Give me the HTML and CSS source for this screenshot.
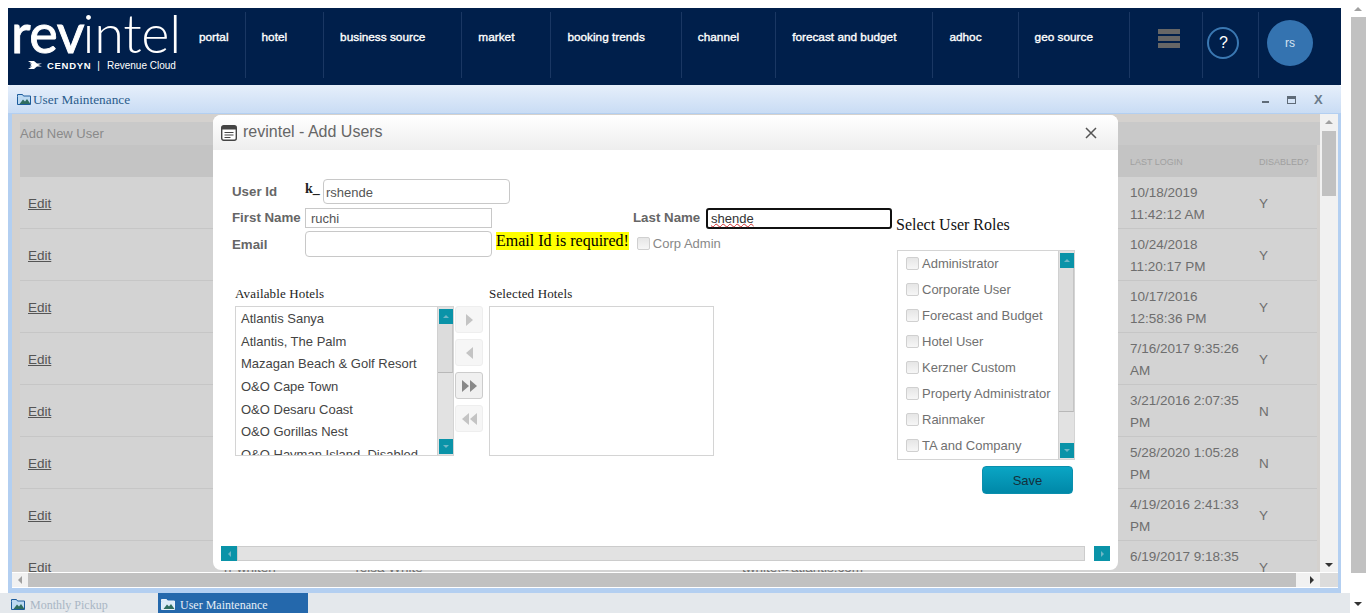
FILE: index.html
```html
<!DOCTYPE html>
<html lang="en">

<head>
    <meta charset="UTF-8">
    <meta name="viewport" content="width=device-width, initial-scale=1.0">
    <title>User Maintenance</title>
    <link rel="stylesheet" href="styles.css">
</head>

<body>
    <div class="shell">
        <header class="topnav">
            <div class="logo">
                <div class="logoWord"><b>rev</b>intel</div>
                <div class="logoSub">
                    <svg class="logoArrow" viewBox="0 0 14 8" width="14" height="8">
                        <path d="M0 0h6l3 2.500h5L10 4l4 1.500H9L6 8H0l4-2.500H1.500L3.500 4 1.500 2.500H4z" fill="#fff" />
                    </svg>
                    <span class="cendyn">CENDYN</span>
                    <span class="pipe">|</span>
                    <span class="cloud">Revenue Cloud</span>
                </div>
            </div>
            <a class="navItem navFirst">portal</a>
            <a class="navItem">hotel</a>
            <a class="navItem">business source</a>
            <a class="navItem">market</a>
            <a class="navItem">booking trends</a>
            <a class="navItem">channel</a>
            <a class="navItem">forecast and budget</a>
            <a class="navItem">adhoc</a>
            <a class="navItem">geo source</a>
            <div class="navTool menuTool">
                <span class="bar"></span><span class="bar"></span><span class="bar"></span>
            </div>
            <div class="navTool helpTool"><span class="helpRing">?</span></div>
            <div class="avatarTool"><span class="avatar">rs</span></div>
        </header>

        <section class="win">
            <div class="winTitle">
                <svg class="winIcon" viewBox="0 0 15 13" width="15" height="13">
                    <path d="M0.500 3.500V1.500h5l1 1.500h7v8.500h-13z" fill="#bcd9f2" stroke="#1d5c9c" />
                    <path d="M2.500 11l3.500-4.500 2 2 2-2.500 3.500 5z" fill="#2f6d5f" />
                </svg>
                <span class="winName">User Maintenance</span>
                <div class="winBtns">
                    <span class="winMin"></span>
                    <span class="winMax"></span>
                    <span class="winClose">X</span>
                </div>
            </div>

            <div class="winBody">
                <div class="viewRow">
                    <div class="view">
                        <div class="addRow">Add New User</div>
                        <table class="users">
                            <colgroup>
                                <col class="colEdit">
                                <col class="colUser">
                                <col class="colName">
                                <col class="colMail">
                                <col class="colLogin">
                                <col class="colOff">
                            </colgroup>
                            <thead>
                                <tr>
                                    <th></th>
                                    <th></th>
                                    <th></th>
                                    <th></th>
                                    <th>LAST LOGIN</th>
                                    <th>DISABLED?</th>
                                </tr>
                            </thead>
                            <tbody>
                                <tr><td><a>Edit</a></td><td></td><td></td><td></td><td>10/18/2019 11:42:12 AM</td><td>Y</td></tr>
                                <tr><td><a>Edit</a></td><td></td><td></td><td></td><td>10/24/2018 11:20:17 PM</td><td>Y</td></tr>
                                <tr><td><a>Edit</a></td><td></td><td></td><td></td><td>10/17/2016 12:58:36 PM</td><td>Y</td></tr>
                                <tr><td><a>Edit</a></td><td></td><td></td><td></td><td>7/16/2017 9:35:26 AM</td><td>Y</td></tr>
                                <tr><td><a>Edit</a></td><td></td><td></td><td></td><td>3/21/2016 2:07:35 PM</td><td>N</td></tr>
                                <tr><td><a>Edit</a></td><td></td><td></td><td></td><td>5/28/2020 1:05:28 PM</td><td>N</td></tr>
                                <tr><td><a>Edit</a></td><td></td><td></td><td></td><td>4/19/2016 2:41:33 PM</td><td>Y</td></tr>
                                <tr><td><a>Edit</a></td><td>rr whiten</td><td>Teisa White</td><td>twhite@atlantis.com</td><td>6/19/2017 9:18:35 PM</td><td>Y</td></tr>
                            </tbody>
                        </table>
                    </div>
                    <div class="vScroll">
                        <span class="tri triUp dim"></span>
                        <div class="vTrack"><div class="vThumb"></div></div>
                        <span class="tri triDown"></span>
                    </div>
                </div>
                <div class="hScroll">
                    <div class="hEnd"><span class="tri triLeft dim"></span></div>
                    <div class="hThumb"></div>
                    <div class="hEnd hEndRight"><span class="tri triRight"></span></div>
                    <div class="hCorner"></div>
                </div>

                <div class="modal">
                    <div class="modalHead">
                        <svg class="modalIcon" viewBox="0 0 16 16" width="16" height="16">
                            <rect x="0.700" y="0.700" width="14.600" height="14.600" rx="2" fill="#fff" stroke="#444" stroke-width="1.400" />
                            <rect x="1" y="1" width="14" height="3.500" fill="#444" />
                            <path d="M3.500 7.500h9M3.500 10h9M3.500 12.500h6" stroke="#444" stroke-width="1.200" />
                        </svg>
                        <span class="modalTitle">revintel - Add Users</span>
                        <svg class="modalClose" viewBox="0 0 12 12" width="12" height="12">
                            <path d="M1 1l10 10M11 1L1 11" stroke="#555" stroke-width="1.500" />
                        </svg>
                    </div>

                    <div class="modalBody">
                        <div class="leftCol">
                            <div class="formRow rowUser">
                                <label class="fieldLabel">User Id</label>
                                <span class="prefix">k_</span>
                                <input class="field fieldUser" type="text" value="rshende">
                            </div>
                            <div class="formRow rowName">
                                <label class="fieldLabel">First Name</label>
                                <input class="field fieldFirst" type="text" value="ruchi">
                                <label class="fieldLabel lastLabel">Last Name</label>
                                <div class="field fieldLast" contenteditable="true" spellcheck="false"><span class="misspelt">shende</span></div>
                            </div>
                            <div class="formRow rowMail">
                                <label class="fieldLabel">Email</label>
                                <input class="field fieldMail" type="text">
                                <span class="emailError">Email Id is required!</span>
                                <span class="check corpCheck"></span>
                                <span class="corpText">Corp Admin</span>
                            </div>

                            <div class="hotels">
                                <div class="hotelCol">
                                    <div class="hotelTitle">Available Hotels</div>
                                    <div class="listBox available">
                                        <ul class="hotelList">
                                            <li>Atlantis Sanya</li>
                                            <li>Atlantis, The Palm</li>
                                            <li>Mazagan Beach &amp; Golf Resort</li>
                                            <li>O&amp;O Cape Town</li>
                                            <li>O&amp;O Desaru Coast</li>
                                            <li>O&amp;O Gorillas Nest</li>
                                            <li>O&amp;O Hayman Island, Disabled</li>
                                        </ul>
                                        <div class="miniScroll hotelScroll">
                                            <span class="tealBtn"><span class="tri triUp"></span></span>
                                            <div class="miniTrack"><div class="miniThumb hotelThumb"></div></div>
                                            <span class="tealBtn"><span class="tri triDown"></span></span>
                                        </div>
                                    </div>
                                </div>
                                <div class="moveBtns">
                                    <button class="moveBtn off" type="button"><span class="tri triRight"></span></button>
                                    <button class="moveBtn off" type="button"><span class="tri triLeft"></span></button>
                                    <button class="moveBtn on" type="button"><span class="tri triRight"></span><span class="tri triRight"></span></button>
                                    <button class="moveBtn off" type="button"><span class="tri triLeft"></span><span class="tri triLeft"></span></button>
                                </div>
                                <div class="hotelCol">
                                    <div class="hotelTitle">Selected Hotels</div>
                                    <div class="listBox selected"></div>
                                </div>
                            </div>
                        </div>

                        <div class="rightCol">
                            <div class="rolesTitle">Select User Roles</div>
                            <div class="listBox roles">
                                <ul class="roleList">
                                    <li><span class="check"></span>Administrator</li>
                                    <li><span class="check"></span>Corporate User</li>
                                    <li><span class="check"></span>Forecast and Budget</li>
                                    <li><span class="check"></span>Hotel User</li>
                                    <li><span class="check"></span>Kerzner Custom</li>
                                    <li><span class="check"></span>Property Administrator</li>
                                    <li><span class="check"></span>Rainmaker</li>
                                    <li><span class="check"></span>TA and Company</li>
                                </ul>
                                <div class="miniScroll roleScroll">
                                    <span class="tealBtn"><span class="tri triUp"></span></span>
                                    <div class="miniTrack"><div class="miniThumb roleThumb"></div></div>
                                    <span class="tealBtn"><span class="tri triDown"></span></span>
                                </div>
                            </div>
                            <button class="saveBtn" type="button">Save</button>
                        </div>
                    </div>

                    <div class="modalScroll">
                        <span class="tealBtn wide"><span class="tri triLeft"></span></span>
                        <div class="modalTrack"></div>
                        <span class="tealBtn wide"><span class="tri triRight"></span></span>
                    </div>
                </div>
            </div>
        </section>

        <footer class="taskbar">
            <div class="task">
                <svg class="winIcon" viewBox="0 0 15 13" width="15" height="13">
                    <path d="M0.500 3.500V1.500h5l1 1.500h7v8.500h-13z" fill="#bcd9f2" stroke="#1d5c9c" />
                    <path d="M2.500 11l3.500-4.500 2 2 2-2.500 3.500 5z" fill="#2f6d5f" />
                </svg>
                <span>Monthly Pickup</span>
            </div>
            <div class="task active">
                <svg class="winIcon" viewBox="0 0 15 13" width="15" height="13">
                    <path d="M0.500 3.500V1.500h5l1 1.500h7v8.500h-13z" fill="#dcebf8" stroke="#e8f0f8" />
                    <path d="M2.500 11l3.500-4.500 2 2 2-2.500 3.500 5z" fill="#2f6d5f" />
                </svg>
                <span>User Maintenance</span>
            </div>
        </footer>
    </div>

    <div class="pageScroll">
        <span class="tri triUp dim"></span>
        <div class="pageTrack"><div class="pageThumb"></div></div>
        <span class="tri triDown"></span>
    </div>
</body>

</html>
```
FILE: styles.css
```css
* {
    box-sizing: border-box;
}

html,
body {
    height: 100%;
}

body {
    margin: 0;
    display: flex;
    overflow: hidden;
    background: #ffffff;
    font-family: "Liberation Sans", Arial, sans-serif;
}

ul {
    margin: 0;
    padding: 0;
    list-style: none;
}

.shell {
    width: 1350px;
    height: 613px;
    padding-top: 8px;
    display: flex;
    flex-direction: column;
}

/* top navigation */
.topnav {
    margin: 0 9px 0 8px;
    height: 77px;
    flex: none;
    display: flex;
    background: #001f4b;
    color: #ffffff;
}

.logo {
    width: 175px;
    padding: 0 0 0 3px;
    flex: none;
}

.logoWord {
    height: 51px;
    font-family: "Lato", sans-serif;
    font-weight: 300;
    font-size: 54px;
    line-height: 50px;
    letter-spacing: -0.300px;
    white-space: nowrap;
}

.logoWord b {
    font-weight: 400;
    -webkit-text-stroke: 0.900px #ffffff;
    margin-right: -2px;
}

.logoSub {
    display: flex;
    align-items: center;
    height: 12px;
    font-size: 9.500px;
    padding-left: 17px;
    white-space: nowrap;
}

.logoArrow {
    margin-right: 5px;
}

.cendyn {
    font-weight: 700;
    letter-spacing: 0.700px;
}

.pipe {
    margin: 0 7px 0 6px;
    font-size: 10px;
}

.cloud {
    font-size: 10px;
}

.navItem {
    padding: 18px 36px 0 16px;
    margin: 4px 0 7px;
    border-right: 1px solid #1a3763;
    font-size: 11.800px;
    -webkit-text-stroke: 0.350px #ffffff;
    white-space: nowrap;
}

.navFirst {
    padding-right: 16px;
}

.navTool {
    margin: 4px 0 7px;
    border-right: 1px solid #1a3763;
    flex: none;
}

.menuTool {
    width: 73px;
    display: flex;
    flex-direction: column;
    align-items: center;
    gap: 2px;
    padding: 17px 0 0 6px;
}

.bar {
    width: 22px;
    height: 5px;
    background: #666666;
}

.helpTool {
    width: 56px;
    display: flex;
    justify-content: center;
    padding: 15px 14px 0 0;
}

.helpRing {
    width: 32px;
    height: 32px;
    flex: none;
    border: 2px solid #3a78b2;
    border-radius: 50%;
    text-align: center;
    font-size: 16px;
    line-height: 28px;
}

.avatarTool {
    flex: 1;
    padding: 12px 0 0 8px;
}

.avatar {
    display: block;
    width: 46px;
    height: 46px;
    border-radius: 50%;
    background: #3473b0;
    color: #d5e3f1;
    font-size: 12px;
    line-height: 46px;
    text-align: center;
}

/* window */
.win {
    margin: 0 9px 0 8px;
    height: 508px;
    flex: none;
    display: flex;
    flex-direction: column;
    background: #b3cff1;
    border-radius: 4px 4px 0 0;
}

.winTitle {
    height: 29px;
    flex: none;
    display: flex;
    align-items: center;
    gap: 1px;
    padding: 1px 17px 0 9px;
    background: linear-gradient(#e6effb, #c9dcf4);
    border-bottom: 1px solid #b3cff1;
    border-radius: 4px 4px 0 0;
}

.winName {
    font-family: "Liberation Serif", serif;
    font-size: 13.300px;
    color: #2b5c8c;
}

.winBtns {
    margin-left: auto;
    display: flex;
    align-items: center;
    gap: 18px;
}

.winMin {
    width: 7px;
    height: 2px;
    margin-top: 5px;
    background: #5f6b78;
}

.winMax {
    width: 9px;
    height: 8px;
    border: 1px solid #5f6b78;
    border-top-width: 3px;
}

.winClose {
    font-size: 13px;
    font-weight: 700;
    color: #6a7a8a;
    width: 10px;
}

.winBody {
    position: relative;
    flex: 1;
    min-height: 0;
    margin: 0 3px 5px 4px;
    display: flex;
    flex-direction: column;
    background: #ffffff;
}

.viewRow {
    height: 458px;
    flex: none;
    display: flex;
}

.view {
    width: 1308px;
    flex: none;
    padding: 8px 0 0 8px;
    background: #d4d1ce;
    overflow: hidden;
}

.addRow {
    height: 23px;
    width: 1300px;
    background: #c9c9c9;
    color: #8a8a8a;
    font-size: 13px;
    line-height: 24px;
}

.users {
    width: 1297px;
    table-layout: fixed;
    border-collapse: separate;
    border-spacing: 0;
    font-size: 13.500px;
    color: #6e6e6e;
}

.colEdit {
    width: 196px;
}

.colUser {
    width: 129px;
}

.colName {
    width: 389px;
}

.colMail {
    width: 388px;
}

.colLogin {
    width: 129px;
}

.users th {
    height: 32px;
    padding: 1px 0 0 8px;
    background: #c4c4c4;
    color: #a0a0a0;
    font-size: 9px;
    font-weight: 400;
    text-align: left;
    white-space: nowrap;
}

.users td {
    height: 52px;
    padding: 5px 8px 2px;
    background: #d3d3d3;
    border-bottom: 1px solid #c6c6c6;
    line-height: 22px;
}

.users a {
    color: #555555;
    text-decoration: underline;
}

.vScroll {
    width: 18px;
    flex: none;
    display: flex;
    flex-direction: column;
    align-items: center;
    background: #f1f1f1;
    padding: 6px 0 5px;
}

.vTrack {
    flex: 1;
    width: 100%;
    padding: 7px 2px 0;
}

.vThumb {
    height: 65px;
    background: #c1c1c1;
}

.hScroll {
    height: 15px;
    flex: none;
    display: flex;
    border-top: 1px solid #ffffff;
    background: #f1f1f1;
}

.hEnd {
    width: 16px;
    flex: none;
    display: flex;
    align-items: center;
    justify-content: center;
}

.hEndRight {
    width: 24px;
    justify-content: flex-end;
    padding-right: 6px;
}

.hThumb {
    width: 1268px;
    background: #c1c1c1;
}

.hCorner {
    flex: 1;
    background: #dcdcdc;
}

/* triangles for scrollbars and move buttons */
.tri {
    display: inline-block;
    width: 0;
    height: 0;
    flex: none;
    border-style: solid;
    border-color: transparent;
}

.triUp {
    border-width: 0 4px 4px;
    border-bottom-color: #333333;
}

.triDown {
    border-width: 4px 4px 0;
    border-top-color: #333333;
}

.triLeft {
    border-width: 4px 4px 4px 0;
    border-right-color: #333333;
}

.triRight {
    border-width: 4px 0 4px 4px;
    border-left-color: #333333;
}

.triUp.dim {
    border-bottom-color: #a0a0a0;
}

.triLeft.dim {
    border-right-color: #a0a0a0;
}

/* modal */
.modal {
    position: absolute;
    left: 201px;
    top: 1px;
    width: 905px;
    height: 455px;
    display: flex;
    flex-direction: column;
    background: #ffffff;
    border-radius: 8px;
}

.modalHead {
    height: 35px;
    flex: none;
    display: flex;
    align-items: center;
    padding: 0 21px 0 8px;
    background: linear-gradient(#ffffff, #eeeeee);
    border-radius: 8px 8px 0 0;
}

.modalIcon {
    margin-top: 1px;
}

.modalTitle {
    margin: -2px 0 0 6px;
    font-size: 16px;
    color: #666666;
}

.modalClose {
    margin-left: auto;
}

.modalBody {
    flex: 1;
    min-height: 0;
    display: flex;
    padding: 29px 0 0 19px;
}

.leftCol {
    width: 664px;
    flex: none;
}

.formRow {
    display: flex;
}

.fieldLabel {
    width: 73px;
    flex: none;
    font-size: 13.300px;
    font-weight: 700;
    color: #666666;
    white-space: nowrap;
}

.prefix {
    width: 18px;
    flex: none;
    font-family: "Liberation Serif", serif;
    font-size: 14px;
    font-weight: 700;
    color: #222222;
    line-height: 20px;
}

.field {
    padding: 0 5px;
    border: 1px solid #c8c8c8;
    font-family: inherit;
    font-size: 13px;
    color: #555555;
    background: #ffffff;
}

.rowUser {
    height: 25px;
}

.rowUser .fieldLabel {
    padding-top: 5px;
}

.fieldUser {
    width: 187px;
    height: 25px;
    padding: 2px 0 0 2px;
    border-radius: 4px;
}

.rowName {
    height: 21px;
    margin-top: 4px;
}

.rowName .fieldLabel {
    line-height: 20px;
}

.fieldFirst {
    width: 187px;
    height: 20px;
}

.lastLabel {
    margin-left: 141px;
}

.fieldLast {
    width: 186px;
    height: 21px;
    padding-left: 3px;
    border: 2px solid #111111;
    border-radius: 3px;
    color: #333333;
    line-height: 17px;
    outline: none;
}

.misspelt {
    text-decoration: underline wavy #d03030 1px;
    text-underline-offset: 0;
}

.rowMail {
    height: 26px;
    margin-top: 2px;
}

.rowMail .fieldLabel {
    padding-top: 6px;
}

.fieldMail {
    width: 187px;
    height: 26px;
    border-radius: 4px;
}

.emailError {
    height: 18px;
    margin: 1px 8px 0 4px;
    background: #ffff00;
    font-family: "Liberation Serif", serif;
    font-size: 16px;
    line-height: 18px;
    color: #000000;
    white-space: nowrap;
}

.check {
    display: inline-block;
    width: 13px;
    height: 13px;
    flex: none;
    border: 1px solid #d0d0d0;
    border-radius: 2px;
    background: linear-gradient(#e6e6e6, #f6f6f6);
}

.corpCheck {
    margin-top: 6px;
}

.corpText {
    margin: 5px 0 0 3px;
    font-size: 13px;
    color: #888888;
}

/* hotel lists */
.hotels {
    margin: 29px 0 0 3px;
    display: flex;
}

.hotelCol {
    flex: none;
}

.hotelTitle {
    height: 20px;
    font-family: "Liberation Serif", serif;
    font-size: 13px;
    letter-spacing: 0.150px;
    line-height: 15px;
    color: #222222;
    white-space: nowrap;
}

.listBox {
    position: relative;
    display: flex;
    border: 1px solid #d4d4d4;
    background: #ffffff;
    overflow: hidden;
}

.available {
    width: 219px;
    height: 150px;
}

.selected {
    width: 225px;
    height: 150px;
}

.hotelList {
    flex: 1;
    padding: 1px 0 0 5px;
    font-size: 13px;
    line-height: 22.670px;
    color: #444444;
    white-space: nowrap;
}

.miniScroll {
    width: 16px;
    flex: none;
    display: flex;
    flex-direction: column;
    align-items: flex-end;
    background: #e2e2e2;
    border-left: 1px solid #d0d0d0;
    padding: 2px 0 1px;
}

.miniTrack {
    flex: 1;
    width: 100%;
}

.miniThumb {
    background: #dcdcdc;
    border-right: 1px solid #c4c4c4;
    border-bottom: 1px solid #b8b8b8;
}

.hotelThumb {
    height: 49px;
}

.roleThumb {
    height: 144px;
}

.tealBtn {
    width: 14px;
    height: 15px;
    flex: none;
    display: flex;
    align-items: center;
    justify-content: center;
    background: #0a93a8;
}

.tealBtn .triUp {
    border-width: 0 3px 3px;
    border-bottom-color: #6fb7c6;
}

.tealBtn .triDown {
    border-width: 3px 3px 0;
    border-top-color: #6fb7c6;
}

.tealBtn .triLeft {
    border-width: 3px 3px 3px 0;
    border-right-color: #6fb7c6;
}

.tealBtn .triRight {
    border-width: 3px 0 3px 3px;
    border-left-color: #6fb7c6;
}

.moveBtns {
    width: 28px;
    flex: none;
    margin: 20px 6px 0 1px;
    display: flex;
    flex-direction: column;
    gap: 6px;
}

.moveBtn {
    width: 28px;
    height: 27px;
    padding: 0;
    display: flex;
    align-items: center;
    justify-content: center;
    gap: 1px;
    border: 1px solid #eeeeee;
    border-radius: 3px;
    background: #f6f6f6;
}

.moveBtn .tri {
    border-width: 6px 0 6px 7px;
}

.moveBtn .triLeft {
    border-width: 6px 7px 6px 0;
}

.moveBtn.off .triRight {
    border-left-color: #c4c4c4;
}

.moveBtn.off .triLeft {
    border-right-color: #c4c4c4;
}

.moveBtn.on {
    border-color: #cccccc;
    background: #f0f0f0;
}

.moveBtn.on .triRight {
    border-left-color: #888888;
}

/* roles */
.rightCol {
    width: 179px;
    flex: none;
    padding-top: 37px;
}

.rolesTitle {
    height: 34px;
    font-family: "Liberation Serif", serif;
    font-size: 16px;
    line-height: 18px;
    color: #111111;
    white-space: nowrap;
}

.roles {
    width: 178px;
    height: 210px;
    margin-left: 1px;
}

.roleList {
    flex: 1;
    margin-top: -1px;
    padding-left: 8px;
    font-size: 13px;
    color: #707070;
    white-space: nowrap;
}

.roleList li {
    height: 26px;
    display: flex;
    align-items: center;
    gap: 3px;
}

.saveBtn {
    display: block;
    width: 91px;
    height: 28px;
    margin: 6px 0 0 86px;
    border: 1px solid #0a8fad;
    border-radius: 4px;
    background: linear-gradient(#0aa5c4, #0088a8);
    color: #14303c;
    font-family: inherit;
    font-size: 13px;
}

.modalScroll {
    height: 15px;
    flex: none;
    margin: 0 8px 9px;
    display: flex;
}

.tealBtn.wide {
    width: 16px;
}

.modalTrack {
    width: 848px;
    margin-right: 9px;
    background: #e2e2e2;
    border: 1px solid #cccccc;
}

/* taskbar */
.taskbar {
    flex: 1;
    display: flex;
    padding-left: 8px;
    background: #e4e8ec;
    font-family: "Liberation Serif", serif;
    font-size: 12px;
    overflow: hidden;
}

.task {
    width: 150px;
    display: flex;
    align-items: center;
    gap: 4px;
    padding-left: 3px;
    color: #a9b6c4;
}

.task span {
    padding-top: 5px;
}

.task .winIcon {
    margin-top: 3px;
}

.task.active {
    background: #2468ac;
    color: #e6eef7;
}

/* page scrollbar */
.pageScroll {
    width: 16px;
    height: 613px;
    flex: none;
    display: flex;
    flex-direction: column;
    align-items: center;
    padding: 7px 0;
}

.pageTrack {
    flex: 1;
    width: 100%;
    padding: 6px 0 0 1px;
}

.pageThumb {
    height: 556px;
    background: #c1c1c1;
}
```
